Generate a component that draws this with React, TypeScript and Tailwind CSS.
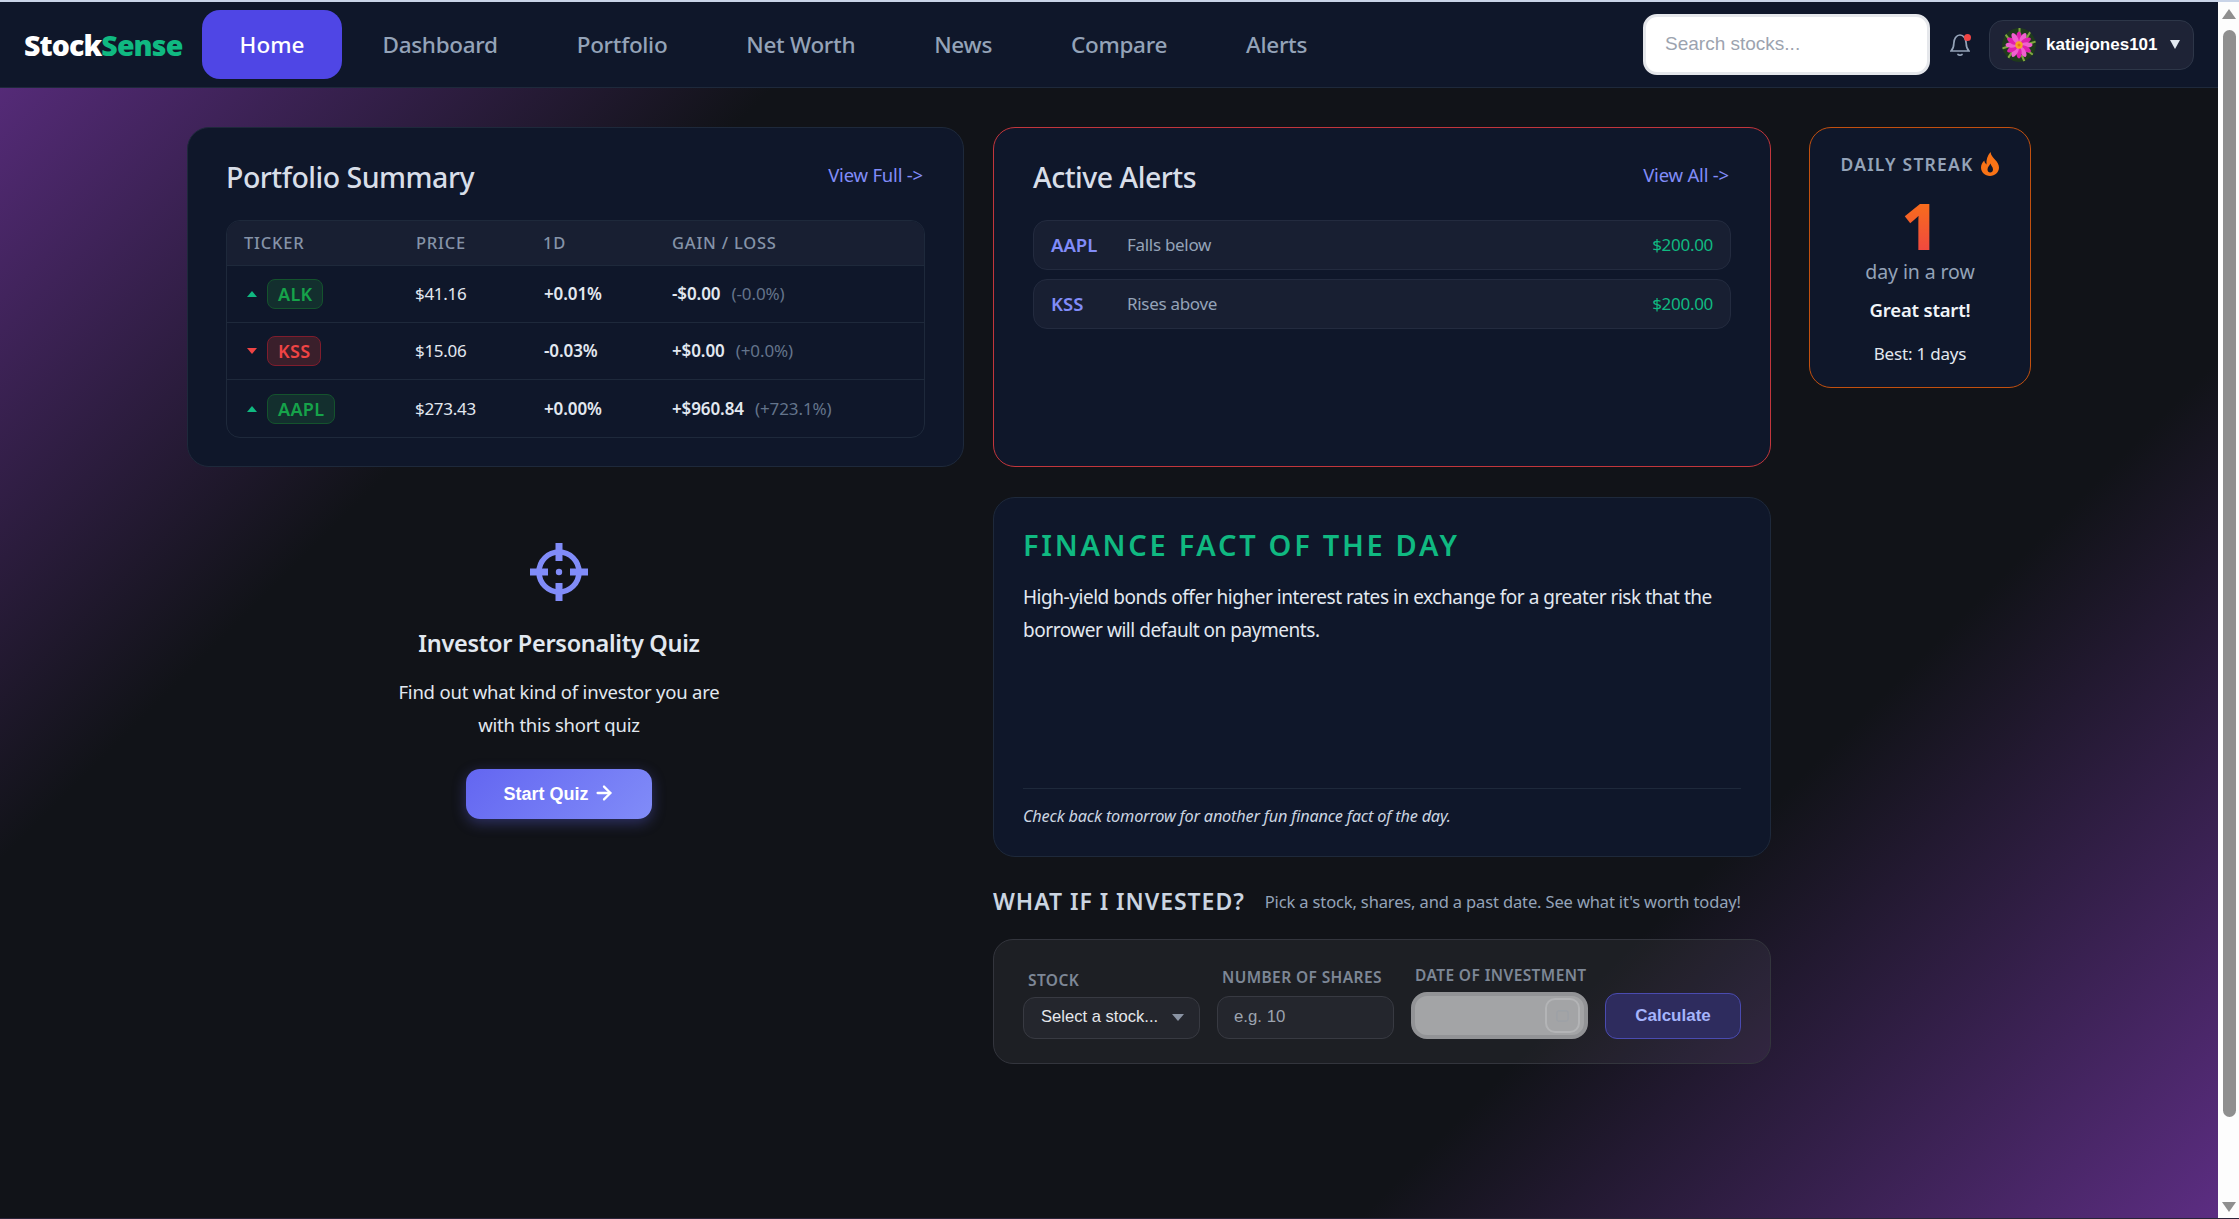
import { ArrowRight } from "lucide-react"

const holdings = [
  { ticker: "ALK", up: true, price: "$41.16", day: "+0.01%", gain: "-$0.00", pct: "(-0.0%)" },
  { ticker: "KSS", up: false, price: "$15.06", day: "-0.03%", gain: "+$0.00", pct: "(+0.0%)" },
  { ticker: "AAPL", up: true, price: "$273.43", day: "+0.00%", gain: "+$960.84", pct: "(+723.1%)" },
]

const alerts = [
  { ticker: "AAPL", rule: "Falls below", price: "$200.00" },
  { ticker: "KSS", rule: "Rises above", price: "$200.00" },
]

const links = ["Dashboard", "Portfolio", "Net Worth", "News", "Compare", "Alerts"]

function Avatar() {
  const petals = [0, 30, 60, 90, 120, 150, 180, 210, 240, 270, 300, 330]
  return (
    <svg viewBox="0 0 33 33" className="h-[34px] w-[34px] shrink-0 rounded-full">
      <circle cx="16.5" cy="16.5" r="16.5" fill="#1f3a1c" />
      <path d="M3 6l8 10M28 3l-6 10M30 26l-8-6M6 29l6-9M17 0v6M0 20l6-2M33 13l-6 2M22 33l-3-7" stroke="#7fa63f" strokeWidth="2" />
      {petals.map((a) => (
        <ellipse key={a} cx="16.5" cy="9" rx="2.6" ry="5.6" fill={a % 60 === 0 ? "#e01fae" : "#f060cf"} transform={`rotate(${a} 16.5 16.5)`} />
      ))}
      <circle cx="16.5" cy="16.5" r="3.6" fill="#f5a623" />
      <circle cx="16.5" cy="16.5" r="1.5" fill="#e8741c" />
    </svg>
  )
}

function Flame() {
  return (
    <svg viewBox="0 0 18 24" className="h-[24px] w-[18px]">
      <path
        fill="#f97316"
        fillRule="evenodd"
        d="M9.5 0c.6 3.6 2.4 5.4 4.6 7.8C16.400 10.300 18 12.600 18 15.500 18 20.300 14 24 9 24S0 20.300 0 15.600c0-2.800 1.300-5.100 3.300-7 .2 1.700.9 3 2.200 3.800C5.100 7.700 6.500 3.300 9.500 0zM9.300 11.500c-.5 2-2.800 3.400-2.800 6 0 1.800 1.200 3 2.700 3s2.800-1.200 2.800-3c0-2.500-1.900-3.800-2.700-6z"
      />
    </svg>
  )
}

function Target() {
  return (
    <svg viewBox="0 0 58 58" className="h-[58px] w-[58px]" fill="#818cf8">
      <circle cx="29" cy="29" r="20" fill="none" stroke="#818cf8" strokeWidth="5.500" />
      <rect x="25.500" y="0" width="7" height="18" />
      <rect x="25.500" y="40" width="7" height="18" />
      <rect x="0" y="25.500" width="18" height="7" />
      <rect x="40" y="25.500" width="18" height="7" />
      <circle cx="29" cy="29" r="3.200" />
    </svg>
  )
}

function Navbar() {
  return (
    <nav className="flex h-[86px] shrink-0 items-center border-b border-[#1e293b] bg-[#0f172a] pl-[24px]">
      <span className="mr-[20px] w-[158px] pt-[2px] text-[28.500px] font-black tracking-[-0.9px]">
        <span className="text-white">Stock</span>
        <span className="text-[#10b981]">Sense</span>
      </span>
      <a className="mr-[1px] flex h-[69px] w-[140px] items-center justify-center rounded-[18px] bg-[#4f46e5] pt-[1px] text-[22.500px] font-medium text-white">
        Home
      </a>
      {links.map((l) => (
        <a key={l} className="px-[39.500px] pt-[1px] text-[22.500px] font-medium tracking-[-0.3px] text-[#94a3b8]">
          {l}
        </a>
      ))}
      <div className="ml-auto flex items-center">
        <div className="flex h-[61px] w-[287px] items-center rounded-[14px] border-[3px] border-[#e5e7eb] bg-white pl-[19px] font-['Liberation_Sans',sans-serif] text-[19px] text-[#9ca3af]">
          Search stocks...
        </div>
        <div className="relative ml-[20px] mr-[19px] h-[23px] w-[20px]">
          <svg viewBox="0 0 20 23" className="h-[23px] w-[20px]" fill="none" stroke="#94a3b8" strokeWidth="1.700" strokeLinecap="round">
            <path d="M1 18c1.800-1.800 2.800-3.500 2.800-7.500C3.800 6 6.400 2 10 2s6.200 4 6.200 8.500c0 4 1 5.700 2.800 7.500H1z" />
            <path d="M8 21.500c1.200.8 2.800.8 4 0" />
          </svg>
          <span className="absolute right-[-1px] top-[1px] h-[7px] w-[7px] rounded-full bg-[#ef4444]" />
        </div>
        <div className="mr-[24px] flex h-[50px] w-[205px] items-center rounded-[14px] border border-[#2d3648] bg-[#1e2336] pl-[12px] font-['Liberation_Sans',sans-serif]">
          <Avatar />
          <span className="ml-[10px] text-[17px] font-bold text-white">katiejones101</span>
          <span className="ml-[12px] h-0 w-0 border-x-[5px] border-t-[9px] border-x-transparent border-t-[#e2e8f0]" />
        </div>
      </div>
    </nav>
  )
}

function CardHeader({ title, link }: { title: string; link: string }) {
  return (
    <div className="mb-[15px] flex h-[52px] items-start justify-between pr-[2px]">
      <h2 className="mt-[-2px] text-[28.500px] font-medium leading-[52px] tracking-[-0.5px] text-[#d8dee8]">{title}</h2>
      <a className="mt-[-3px] text-[18.500px] leading-[50px] tracking-[-0.2px] text-[#818cf8]">{link}</a>
    </div>
  )
}

function PortfolioSummary() {
  return (
    <section className="h-[340px] rounded-[22px] border border-[#1e293b] bg-[#0f172a] pl-[38px] pr-[38px] pt-[25px]">
      <CardHeader title="Portfolio Summary" link="View Full ->" />
      <div className="overflow-hidden rounded-[14px] border border-[#1e293b]">
        <div className="grid h-[45px] grid-cols-[172px_127px_129px_1fr] items-center border-b border-[#1e293b] bg-[#181f32] pl-[17px] text-[16.500px] font-medium tracking-[0.8px] text-[#8593a8]">
          <span>TICKER</span>
          <span>PRICE</span>
          <span>1D</span>
          <span>GAIN / LOSS</span>
        </div>
        {holdings.map((h, i) => (
          <div
            key={h.ticker}
            className={`grid h-[57px] grid-cols-[172px_127px_129px_1fr] items-center pl-[20px] text-[17px] tracking-[-0.1px] text-[#e2e8f0] ${i < 2 ? "border-b border-[#1e293b]" : ""}`}
          >
            <div className="flex items-center">
              {h.up ? (
                <span className="mr-[10px] h-0 w-0 border-x-[5.500px] border-b-[6px] border-x-transparent border-b-[#10b981]" />
              ) : (
                <span className="mr-[10px] h-0 w-0 border-x-[5.500px] border-t-[6px] border-x-transparent border-t-[#ef4444]" />
              )}
              <span
                className={`rounded-[8px] border px-[10px] text-[18px] font-semibold leading-[28px] tracking-[0.3px] ${
                  h.up ? "border-[#14532d] bg-[#132f2e] text-[#16a34a]" : "border-[#7f1d2d] bg-[#3a1f2b] text-[#ef4444]"
                }`}
              >
                {h.ticker}
              </span>
            </div>
            <span className="ml-[-4px] tracking-[-0.3px]">{h.price}</span>
            <span className="ml-[-2px] font-semibold">{h.day}</span>
            <span className="ml-[-3px]">
              <span className="font-semibold">{h.gain}</span>
              <span className="ml-[11px] text-[#64748b]">{h.pct}</span>
            </span>
          </div>
        ))}
      </div>
    </section>
  )
}

function QuizPromo() {
  return (
    <section className="mt-[76px] flex w-[744px] flex-col items-center">
      <Target />
      <h3 className="mt-[24px] text-[23.500px] font-semibold leading-[36px] tracking-[-0.3px] text-[#e2e8f0]">Investor Personality Quiz</h3>
      <p className="mt-[15px] text-center text-[18.500px] leading-[32.500px] tracking-[-0.2px] text-[#e2e8f0]">
        Find out what kind of investor you are
        <br />
        with this short quiz
      </p>
      <button className="mt-[28px] flex h-[50px] w-[186px] items-center justify-center gap-[4px] rounded-[14px] bg-[linear-gradient(135deg,#6366f1,#818cf8)] font-['Liberation_Sans',sans-serif] text-[18px] font-bold text-white shadow-[0_4px_14px_rgba(99,102,241,0.35)]">
        Start Quiz
        <ArrowRight className="mb-[3px] h-[22px] w-[22px]" strokeWidth={2.500} />
      </button>
    </section>
  )
}

function ActiveAlerts() {
  return (
    <section className="h-[340px] rounded-[22px] border-[1.500px] border-[#c2363c] bg-[#0f172a] px-[39px] pt-[25px]">
      <CardHeader title="Active Alerts" link="View All ->" />
      <div className="flex flex-col gap-[9px]">
        {alerts.map((a) => (
          <div key={a.ticker} className="flex h-[50px] items-center rounded-[14px] border border-[#232b3f] bg-[#181f32] pl-[17px] pr-[17px]">
            <span className="w-[76px] text-[18.500px] font-semibold text-[#818cf8]">{a.ticker}</span>
            <span className="text-[17px] tracking-[-0.3px] text-[#94a3b8]">{a.rule}</span>
            <span className="ml-auto text-[17px] tracking-[-0.3px] text-[#10b981]">{a.price}</span>
          </div>
        ))}
      </div>
    </section>
  )
}

function FinanceFact() {
  return (
    <section className="mt-[30px] flex h-[360px] flex-col rounded-[22px] border border-[#1e293b] bg-[#0f172a] px-[29px] pt-[27px]">
      <h2 className="text-[29px] font-semibold leading-[40px] tracking-[2.700px] text-[#10b981]">FINANCE FACT OF THE DAY</h2>
      <p className="mt-[16px] text-[19px] leading-[33px] tracking-[-0.46px] text-[#e2e8f0]">
        High-yield bonds offer higher interest rates in exchange for a greater risk that the borrower will default on payments.
      </p>
      <div className="mt-auto flex h-[68px] items-center border-t border-[#1e293b] pb-[13px] text-[16.300px] italic tracking-[-0.2px] text-[#cbd5e1]">
        Check back tomorrow for another fun finance fact of the day.
      </div>
    </section>
  )
}

function WhatIf() {
  const label = "whitespace-nowrap text-[15.500px] font-semibold tracking-[0.4px] text-[#7d8796]"
  return (
    <section className="mt-[27px]">
      <div className="flex h-[34px] items-center">
        <h2 className="text-[23px] font-semibold tracking-[0.950px] text-[#cbd5e1]">WHAT IF I INVESTED?</h2>
        <span className="ml-[20px] pt-[2px] text-[16.500px] tracking-[-0.14px] text-[#94a3b8]">Pick a stock, shares, and a past date. See what it's worth today!</span>
      </div>
      <div className="mt-[21px] flex h-[125px] items-end gap-[17px] rounded-[20px] border border-[#33353d] bg-white/5 pb-[24px] pl-[29px] pr-[29px]">
        <div className="w-[177px]">
          <div className={`${label} mb-[5px] ml-[5px]`}>STOCK</div>
          <div className="flex h-[42px] items-center justify-between rounded-[12px] border border-[#383a42] bg-[#24262d] pb-[1px] pl-[17px] pr-[15px] font-['Liberation_Sans',sans-serif] text-[16.600px] text-[#e5e7eb]">
            Select a stock...
            <span className="h-0 w-0 border-x-[6px] border-t-[7px] border-x-transparent border-t-[#8a93a3]" />
          </div>
        </div>
        <div className="w-[177px]">
          <div className={`${label} mb-[7px] ml-[5px]`}>NUMBER OF SHARES</div>
          <div className="flex h-[43px] items-center rounded-[12px] border border-[#383a42] bg-[#24262d] pb-[1px] pl-[16px] font-['Liberation_Sans',sans-serif] text-[16.800px] text-[#9ca3af]">
            e.g. 10
          </div>
        </div>
        <div className="w-[177px]">
          <div className={`${label} mb-[5px] ml-[4px]`}>DATE OF INVESTMENT</div>
          <div className="flex h-[47px] items-center justify-end rounded-[16px] border-[4px] border-[#929396] bg-[#a3a4a6] pr-[4px]">
            <div className="flex h-[35px] w-[35px] items-center justify-center rounded-[10px] border-2 border-[#b3b4b6]">
              <svg viewBox="0 0 14 14" className="h-[13px] w-[13px]" fill="none" stroke="#9aa0a8" strokeWidth="1">
                <rect x="1" y="2" width="12" height="11" rx="1.500" />
              </svg>
            </div>
          </div>
        </div>
        <button className="h-[46px] w-[136px] rounded-[12px] border border-[#4a4bb0] bg-[#2e2c5e] font-['Liberation_Sans',sans-serif] text-[17px] font-bold text-[#a5b4fc]">
          Calculate
        </button>
      </div>
    </section>
  )
}

function DailyStreak() {
  return (
    <section className="flex h-[261px] w-[222px] flex-col items-center rounded-[22px] border-[1.500px] border-[#c2500f] bg-[#0f172a]">
      <div className="mt-[23px] flex h-[26px] items-center gap-[8px]">
        <span className="text-[17.500px] font-semibold tracking-[1.200px] text-[#94a3b8]">DAILY STREAK</span>
        <Flame />
      </div>
      <div className="mt-[18px] bg-[linear-gradient(180deg,#f97316,#ef4444)] bg-clip-text text-[64px] font-extrabold leading-[62px] text-transparent">1</div>
      <div className="text-[19.500px] leading-[30px] tracking-[-0.1px] text-[#94a3b8]">day in a row</div>
      <div className="mt-[8px] text-[18.500px] font-semibold leading-[30px] tracking-[-0.2px] text-[#f1f5f9]">Great start!</div>
      <div className="mt-[14px] text-[17px] leading-[30px] tracking-[-0.2px] text-[#e2e8f0]">Best: 1 days</div>
    </section>
  )
}

function Scrollbar() {
  return (
    <div className="flex w-[21px] shrink-0 flex-col items-center bg-[#fdfdfd] pl-[1px]">
      <span className="mt-[7px] h-0 w-0 border-x-[7px] border-b-[10px] border-x-transparent border-b-[#8f8f8f]" />
      <div className="mt-[11px] h-[1087px] w-[13px] rounded-full bg-[#8f8f8f]" />
      <span className="mt-auto mb-[6px] h-0 w-0 border-x-[7px] border-t-[10px] border-x-transparent border-t-[#8f8f8f]" />
    </div>
  )
}

export default function App() {
  return (
    <div className="flex h-screen flex-col overflow-hidden bg-[#111318] font-['Noto_Sans',sans-serif]">
      <div className="h-[2px] shrink-0 bg-[#c9d4e8]" />
      <div className="flex min-h-0 flex-1">
        <div className="flex min-w-0 flex-1 flex-col bg-[linear-gradient(135deg,#5c2d82_0%,#111318_25%,#111318_75%,#5c2d82_100%)]">
          <Navbar />
          <main className="flex pl-[187px] pt-[39px]">
            <div className="mr-[29px] w-[777px]">
              <PortfolioSummary />
              <QuizPromo />
            </div>
            <div className="mr-[38px] w-[778px]">
              <ActiveAlerts />
              <FinanceFact />
              <WhatIf />
            </div>
            <DailyStreak />
          </main>
        </div>
        <Scrollbar />
      </div>
      <div className="h-px shrink-0 bg-[#2a2438]" />
    </div>
  )
}
